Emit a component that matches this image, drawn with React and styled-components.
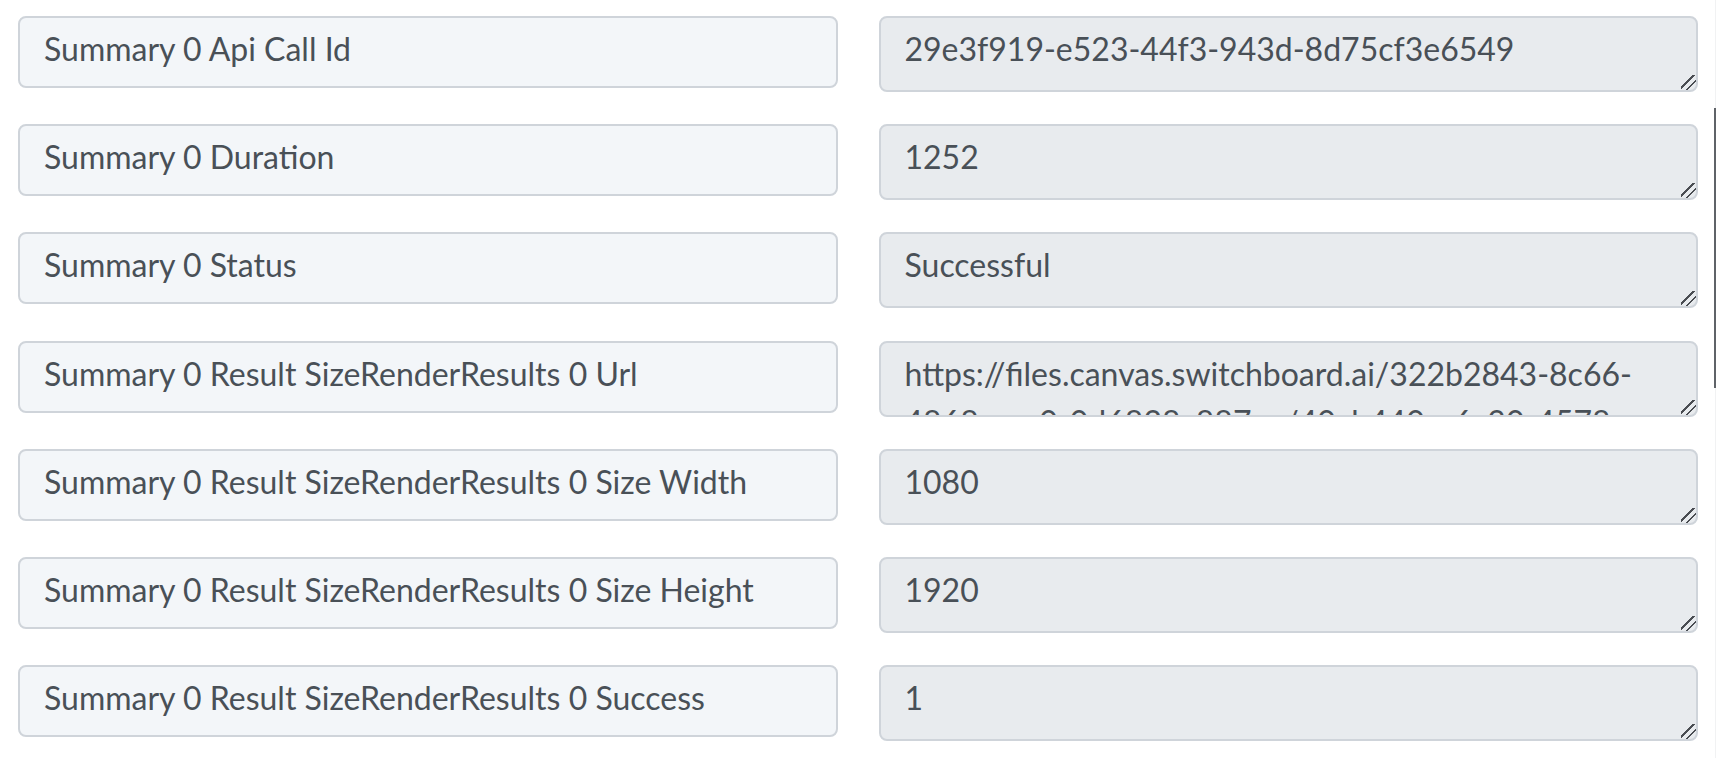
import React from "react";
import styled, { createGlobalStyle } from "styled-components";

const Global = createGlobalStyle`
  html, body {
    margin: 0;
    padding: 0;
    background: #ffffff;
    overflow: hidden;
  }
  body {
    font-family: Lato, "Noto Sans", sans-serif;
  }
`;

const Page = styled.div`
  position: relative;
  width: 1716px;
  height: 758px;
  box-sizing: border-box;
  padding: 16px 18px 0 18px;
  display: flex;
  flex-direction: column;
  gap: 32.2px;
  overflow: hidden;
`;

const Row = styled.div`
  display: flex;
  align-items: flex-start;
  gap: 41px;
`;

const Label = styled.div`
  flex: 1 1 0;
  min-width: 0;
  box-sizing: border-box;
  height: 72px;
  padding: 7px 24px;
  border: 2px solid #cfd4da;
  border-radius: 8px;
  background: #f3f6f9;
  color: #495057;
  font-family: Lato, "Noto Sans", sans-serif;
  font-size: 32px;
  line-height: 48px;
  white-space: nowrap;
  overflow: hidden;
`;

const Value = styled.textarea`
  flex: 1 1 0;
  min-width: 0;
  box-sizing: border-box;
  height: 76px;
  margin: 0;
  padding: 7px 24px;
  border: 2px solid #cfd4da;
  border-radius: 8px;
  background: #e8ebee;
  color: #495057;
  font-family: Lato, "Noto Sans", sans-serif;
  font-size: 32px;
  line-height: 48px;
  outline: none;
  resize: vertical;
  overflow: hidden;
  &::-webkit-scrollbar {
    width: 16px;
    height: 16px;
    background: transparent;
  }
  &::-webkit-resizer {
    background: linear-gradient(
      135deg,
      transparent 0 38%,
      #4a4d52 38% 47%,
      transparent 47% 64%,
      #4a4d52 64% 73%,
      transparent 73%
    );
  }
`;

const ScrollTrack = styled.div`
  position: absolute;
  top: 0;
  right: 0;
  width: 1px;
  height: 100%;
  background: #f1f2f3;
`;

const ScrollThumb = styled.div`
  position: absolute;
  top: 108px;
  right: 0;
  width: 2px;
  height: 280px;
  background: #5f6368;
`;

const rows = [
  ["Summary 0 Api Call Id", "29e3f919-e523-44f3-943d-8d75cf3e6549"],
  ["Summary 0 Duration", "1252"],
  ["Summary 0 Status", "Successful"],
  [
    "Summary 0 Result SizeRenderResults 0 Url",
    "https://files.canvas.switchboard.ai/322b2843-8c66-4868-aea0-0d6828c887ea/40cb440e-6c30-4578-9b1a-2f0c3d7e1a55.png",
  ],
  ["Summary 0 Result SizeRenderResults 0 Size Width", "1080"],
  ["Summary 0 Result SizeRenderResults 0 Size Height", "1920"],
  ["Summary 0 Result SizeRenderResults 0 Success", "1"],
];

export default function App() {
  return (
    <>
      <Global />
      <Page>
        {rows.map(([label, value]) => (
          <Row key={label}>
            <Label>{label}</Label>
            <Value readOnly value={value} />
          </Row>
        ))}
        <ScrollTrack />
        <ScrollThumb />
      </Page>
    </>
  );
}
